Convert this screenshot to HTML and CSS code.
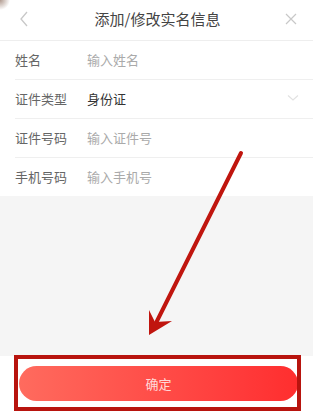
FILE: index.html
```html
<!DOCTYPE html>
<html lang="zh">
<head>
<meta charset="utf-8">
<link rel="stylesheet" href="styles.css">
</head>
<body>
<div class="page">
  <header class="topbar">
    <svg class="back" width="10" height="16" viewBox="0 0 10 16"><path d="M8 1 L2 8 L8 15" fill="none" stroke="#c8c8c8" stroke-width="1.3"/></svg>
    <h1 class="title">添加/修改实名信息</h1>
    <svg class="close" width="12" height="12" viewBox="0 0 12 12"><path d="M1 1 L11 11 M11 1 L1 11" fill="none" stroke="#c8c8c8" stroke-width="1.2"/></svg>
  </header>
  <section class="form">
    <div class="row"><span class="label">姓名</span><span class="value ph">输入姓名</span></div>
    <div class="row"><span class="label">证件类型</span><span class="value">身份证</span>
      <svg class="drop" width="12" height="8" viewBox="0 0 12 8"><path d="M1 1.5 L6 6 L11 1.5" fill="none" stroke="#e2e2e2" stroke-width="1.2"/></svg>
    </div>
    <div class="row"><span class="label">证件号码</span><span class="value ph">输入证件号</span></div>
    <div class="row"><span class="label">手机号码</span><span class="value ph">输入手机号</span></div>
  </section>
  <div class="spacer"></div>
  <footer class="bottom">
    <button class="ok">确定</button>
  </footer>
  <div class="mark"></div>
  <svg class="arrow" width="313" height="416" viewBox="0 0 313 416">
    <path d="M241 153 L153 329" stroke="#c0150e" stroke-width="4" stroke-linecap="round" fill="none"/>
    <path d="M149 335 L149 310 L155 322 L172 321 Z" fill="#c0150e"/>
  </svg>
</div>
</body>
</html>
```
FILE: styles.css
```css
* { box-sizing: border-box; margin: 0; padding: 0; }
html, body { width: 313px; height: 416px; overflow: hidden; }
body {
  font-family: "Noto Sans CJK SC", "Noto Sans", sans-serif;
  background: #f5f5f5;
}
.page {
  position: relative;
  width: 313px;
  height: 416px;
  display: flex;
  flex-direction: column;
}
.topbar {
  height: 41px;
  flex: none;
  background: radial-gradient(circle at 0 0, rgba(110, 70, 50, 0.55), rgba(255,255,255,0) 10px), #fff;
  border-bottom: 1px solid #eeeeee;
  display: flex;
  align-items: center;
  padding: 0 16px 3px 19px;
}
.back { flex: none; }
.title {
  flex: 1;
  text-align: center;
  font-size: 15px;
  font-weight: normal;
  color: #444;
  margin-left: 1px;
}
.close { flex: none; }
.form {
  background: #fff;
  flex: none;
}
.row {
  height: 39px;
  margin-left: 15px;
  border-bottom: 1px solid #efefef;
  display: flex;
  align-items: center;
  padding-right: 14px;
  padding-bottom: 2px;
}
.row:last-child { border-bottom: none; height: 38px; }
.label {
  width: 72px;
  font-size: 13px;
  color: #666;
  flex: none;
}
.value {
  flex: 1;
  font-size: 13px;
  color: #333;
}
.value.ph { color: #aaa; }
.drop { flex: none; }
.spacer { flex: 1; }
.bottom {
  height: 60px;
  flex: none;
  background: #fff;
  padding: 10px 15px 0 19px;
}
.ok {
  display: block;
  width: 279px;
  height: 35px;
  border: none;
  border-radius: 18px;
  background: linear-gradient(90deg, #ff6b5e, #ff3a3a 80%, #ff2e2e);
  color: rgba(255, 235, 235, 0.9);
  font-family: inherit;
  font-size: 13px;
}
.mark {
  position: absolute;
  left: 14px;
  top: 355px;
  width: 287px;
  height: 56px;
  border: 4px solid #b8140e;
}
.arrow {
  position: absolute;
  left: 0;
  top: 0;
  pointer-events: none;
}
```
